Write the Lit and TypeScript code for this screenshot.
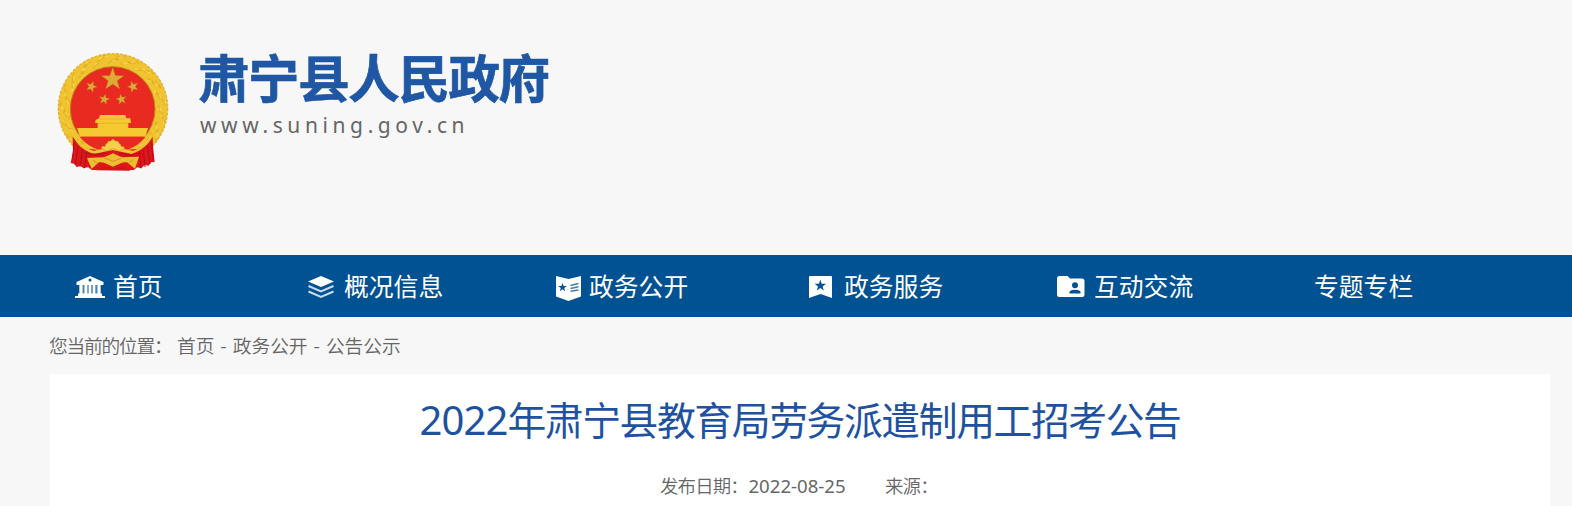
import { LitElement, css, html, svg } from "lit";
import { customElement, property } from "lit/decorators.js";

const star = (cx: number, cy: number, r: number, turn = 0) =>
  Array.from({ length: 10 }, (_, i) => {
    const angle = ((i * 36 - 90 + turn) * Math.PI) / 180;
    const radius = i % 2 ? r * 0.4 : r;
    return `${(cx + radius * Math.cos(angle)).toFixed(1)},${(cy + radius * Math.sin(angle)).toFixed(1)}`;
  }).join(" ");

@customElement("national-emblem")
class NationalEmblem extends LitElement {
  static styles = css`
    :host {
      display: block;
      width: 112px;
      height: 119px;
    }
    svg {
      display: block;
    }
  `;

  // short ear-of-wheat strokes running round the golden ring
  #grains() {
    return Array.from({ length: 150 }, (_, i) => {
      const angle = i * 2.4;
      const radius = 134 + ((i * 7) % 27);
      const x = 204 + radius * Math.cos(angle);
      const y = 205 + radius * Math.sin(angle);
      const tilt = (angle * 180) / Math.PI + 55 + ((i * 31) % 60);
      return svg`<ellipse cx=${x} cy=${y} rx="6" ry="1.8"
        transform="rotate(${tilt} ${x} ${y})"
        fill=${i % 3 ? "#d9a51f" : "#fbe06a"} opacity=".75" />`;
    });
  }

  render() {
    return html`
      <svg width="112" height="119" viewBox="36 36 336 357">
        <circle cx="204" cy="205" r="164" fill="#f0c330" stroke="#e2b136" stroke-width="4" stroke-dasharray="9 4" />
        ${this.#grains()}
        <circle cx="203" cy="207" r="127" fill="#e92a20" stroke="#b9821c" stroke-width="3" />
        <g fill="#dfa936" stroke="#b5651a" stroke-width="1">
          <polygon points=${star(203, 118, 36)} />
          <polygon points=${star(139, 140, 18, 20)} />
          <polygon points=${star(264, 140, 18, -20)} />
          <polygon points=${star(178, 178, 17, 12)} />
          <polygon points=${star(229, 178, 17, -12)} />
        </g>
        <g fill="#f5c92f">
          <path d="M165 225h76l3 10h12l2 14H150l2-9 10-5z" />
          <path d="M158 248h92v16h59l-8 26H105l-9-26h62z" />
          <path d="M158 250h92M165 237h76" stroke="#d99a25" stroke-width="1.5" />
        </g>
        <path d="M104 290h198q-36 45-98 46-65-2-100-46z" fill="#e92a20" />
        <path d="M83 290q18 26 48 37l68 5 80-5q28-12 44-37l1 29 5 47-11 1-7 10-12-2-10 10-13-3-9 8H140l-10-8-15 2-9-6-11 3-8-10-10-2 7-33z" fill="#dc161a" />
        <path d="M88 308l-6 50M99 320l-8 54M113 328l-8 52M126 335l-8 50M320 306l4 54M308 320l7 52M295 329l5 52M284 335l3 50" stroke="#b10f18" stroke-width="3" fill="none" />
        <path d="M80 270q20 50 66 62l30-6 10-16q4-10 10-6l8-7 9 7q8-3 9 6l12 16 30 6q44-12 62-62-4 48-66 72l-57-12-57 12q-58-20-66-72z" fill="#f0c234" />
        <path d="M168 324q4-8 13-4-1-8 7-10 3-10 10-6 6-10 12 0 8-3 11 6 8 3 7 10 8-3 11 5l-16 8q-20-14-38 0z" fill="#f5d04a" stroke="#d39a24" stroke-width="1.5" />
        <path d="M126 354l50-2q12-4 28-12 16 8 28 12l50-2-12 36-24-19q-14-2-22 4l-20 9-20-9q-10-6-22-4l-22 19z" fill="#eebd32" />
        <path d="M118 338q36 12 66 1M222 339q38 13 68-1" stroke="#c01518" stroke-width="6" fill="none" />
        <path d="M178 354l26 10 24-9M144 360l12 9M264 359l-12 10" stroke="#c98a1e" stroke-width="2.5" fill="none" />
        <path d="M153 391l24-13 27 9 26-9 27 14z" fill="#d81318" />
      </svg>
    `;
  }
}

const icons: Record<string, unknown> = {
  home: svg`
    <path d="M15 0 1.500 6v3h27V6z" />
    <rect x="4" y="8" width="22" height="10" fill-opacity=".3" />
    <path d="M4.500 8.500h3V18h-3zM9.500 8.500h2.800V18H9.500zM13.700 8.500h2.500V18h-2.500zM17.800 8.500h2.500V18h-2.500zM22.500 8.500h3V18h-3zM3 17.500h24V20H3zM0 20h30v2H0z" />
    <circle cx="15" cy="4" r="1.500" fill="#015293" />`,
  layers: svg`
    <path d="M13 0 26 5.500 13 11 0 5.500z" />
    <path d="M.5 10 13 15.500 25.500 10M.5 15.500 13 21l12.500-5.500" fill="none" stroke="#fff" stroke-opacity=".8" stroke-width="2" />`,
  book: svg`
    <path d="M0 0 12.500 3 25 0v20.500L12.500 25 0 20.500z" />
    <polygon points=${star(6.500, 11.500, 4.600)} fill="#015293" />
    <path d="M14.500 9.500 22.500 7.500M14.500 12.500 22.500 10.800M14.500 15.200 22.500 14" stroke="#015293" stroke-opacity=".75" stroke-width="1.400" />`,
  bookmark: svg`
    <path d="M0 1q0-1 1-1h21q1 0 1 1v21l-11.500-4L0 22z" />
    <polygon points=${star(11.300, 9.700, 6)} fill="#015293" />`,
  folder: svg`
    <path d="M2.500 0h8L13 2.500h12q2.500 0 2.500 2.500v13.500q0 2.500-2.500 2.500H2.500Q0 21 0 18.500v-16Q0 0 2.500 0z" />
    <circle cx="18" cy="9.300" r="3" fill="#015293" />
    <path d="M12.500 17.500v-1.200q0-2.600 5.500-2.600t5.500 2.600v1.200z" fill="#015293" />`,
};

@customElement("nav-item")
class NavItem extends LitElement {
  static styles = css`
    :host {
      display: flex;
      align-items: center;
      height: 62px;
    }
    .icon {
      display: block;
      height: 25px;
      margin-top: 4px;
      fill: #fff;
      overflow: visible;
    }
    .label {
      color: #fff;
      font-size: 24.8px;
      line-height: 36px;
      white-space: nowrap;
    }
  `;

  @property() icon = "";
  @property() label = "";
  @property({ type: Number }) space = 0;

  render() {
    return html`
      ${this.icon
        ? html`<svg class="icon" width=${this.space} height="25">${icons[this.icon]}</svg>`
        : ""}
      <span class="label">${this.label}</span>
    `;
  }
}

const menu = [
  { label: "首页", icon: "home", space: 38 },
  { label: "概况信息", icon: "layers", space: 36 },
  { label: "政务公开", icon: "book", space: 33 },
  { label: "政务服务", icon: "bookmark", space: 35 },
  { label: "互动交流", icon: "folder", space: 37 },
  { label: "专题专栏", icon: "", space: 0 },
];

@customElement("app-root")
class AppRoot extends LitElement {
  static styles = css`
    :host {
      display: flex;
      flex-direction: column;
      height: 506px;
      overflow: hidden;
      background: #f7f7f7;
      color: #666;
      font-family: "Noto Sans", "Noto Sans CJK SC", sans-serif;
    }
    .header {
      display: flex;
      gap: 30px;
      box-sizing: border-box;
      height: 255px;
      padding: 52px 0 0 57px;
    }
    .site-name {
      margin: -4px 0 0 -1px;
      color: #1f57a4;
      font: bold 51.5px/56px "Noto Sans CJK SC", sans-serif;
      letter-spacing: -1.4px;
      -webkit-text-stroke: 0.7px #1f57a4;
    }
    .site-url {
      margin: 7px 0 0 1px;
      font-size: 21px;
      line-height: 28px;
      letter-spacing: 4.6px;
    }
    .nav {
      display: grid;
      grid-template-columns: 233px 248px 253px 248px 257px 1fr;
      height: 62px;
      padding-left: 75px;
      background: #015293;
    }
    .crumbs {
      display: flex;
      height: 57px;
      padding-left: 49px;
      font-family: "Noto Sans CJK SC", sans-serif;
      font-weight: 350;
      font-size: 18.7px;
      line-height: 55px;
      white-space: pre;
    }
    .crumbs-label {
      width: 128px;
      letter-spacing: -1.2px;
    }
    .dash {
      width: 18.4px;
      text-align: center;
    }
    .article {
      flex: 1;
      width: 1500px;
      margin-left: 50px;
      background: #fff;
      text-align: center;
    }
    .title {
      margin: 0;
      padding-top: 14px;
      color: #1e52a0;
      font: 400 38.8px/60px "Noto Sans CJK SC", sans-serif;
      letter-spacing: -1.4px;
    }
    .year {
      font-family: "Noto Sans", sans-serif;
      font-size: 40px;
      letter-spacing: -0.9px;
    }
    .meta {
      display: flex;
      padding: 21px 0 0 610px;
      font-family: "Noto Sans CJK SC", sans-serif;
      font-weight: 350;
      font-size: 18.4px;
      line-height: 28px;
    }
    .meta-label {
      letter-spacing: -0.8px;
    }
    .date {
      width: 137px;
      font-family: "Noto Sans", sans-serif;
      font-weight: 400;
      font-size: 18.6px;
      line-height: 29px;
      text-align: left;
      text-indent: 0.5px;
    }
  `;

  render() {
    return html`
      <header class="header">
        <national-emblem></national-emblem>
        <div>
          <h1 class="site-name">肃宁县人民政府</h1>
          <p class="site-url">www.suning.gov.cn</p>
        </div>
      </header>
      <nav class="nav">
        ${menu.map(
          ({ label, icon, space }) =>
            html`<nav-item label=${label} icon=${icon} space=${space}></nav-item>`
        )}
      </nav>
      <div class="crumbs">
        <span class="crumbs-label">您当前的位置：</span><span>首页</span
        ><span class="dash">-</span><span>政务公开</span
        ><span class="dash">-</span><span>公告公示</span>
      </div>
      <main class="article">
        <h2 class="title"><span class="year">2022</span>年肃宁县教育局劳务派遣制用工招考公告</h2>
        <div class="meta">
          <span class="meta-label">发布日期：</span><span class="date">2022-08-25</span>
          <span class="meta-label">来源：</span>
        </div>
      </main>
    `;
  }
}
